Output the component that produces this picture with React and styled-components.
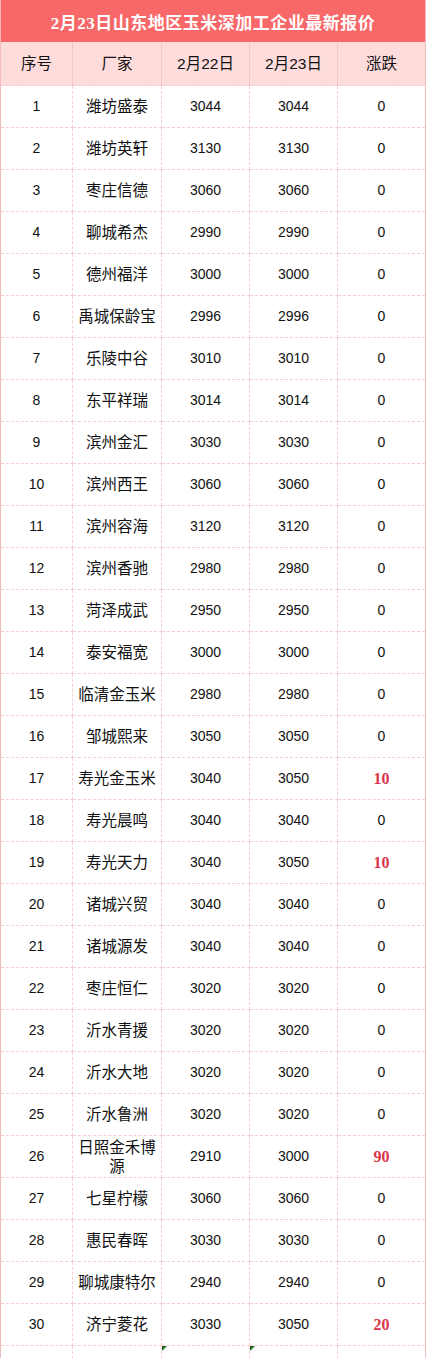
import React from 'react'
import styled, { createGlobalStyle } from 'styled-components'

const rows = [
  ['潍坊盛泰', 3044, 3044],
  ['潍坊英轩', 3130, 3130],
  ['枣庄信德', 3060, 3060],
  ['聊城希杰', 2990, 2990],
  ['德州福洋', 3000, 3000],
  ['禹城保龄宝', 2996, 2996],
  ['乐陵中谷', 3010, 3010],
  ['东平祥瑞', 3014, 3014],
  ['滨州金汇', 3030, 3030],
  ['滨州西王', 3060, 3060],
  ['滨州容海', 3120, 3120],
  ['滨州香驰', 2980, 2980],
  ['菏泽成武', 2950, 2950],
  ['泰安福宽', 3000, 3000],
  ['临清金玉米', 2980, 2980],
  ['邹城熙来', 3050, 3050],
  ['寿光金玉米', 3040, 3050],
  ['寿光晨鸣', 3040, 3040],
  ['寿光天力', 3040, 3050],
  ['诸城兴贸', 3040, 3040],
  ['诸城源发', 3040, 3040],
  ['枣庄恒仁', 3020, 3020],
  ['沂水青援', 3020, 3020],
  ['沂水大地', 3020, 3020],
  ['沂水鲁洲', 3020, 3020],
  ['日照金禾博源', 2910, 3000],
  ['七星柠檬', 3060, 3060],
  ['惠民春晖', 3030, 3030],
  ['聊城康特尔', 2940, 2940],
  ['济宁菱花', 3030, 3050]
]

const GlobalStyle = createGlobalStyle`
  body {
    margin: 0;
    background: #ffffff;
    font-family: "Liberation Sans", "Noto Sans CJK SC", sans-serif;
    color: #111111;
  }
`

const Sheet = styled.div`
  width: 426px;
  height: 1358px;
  overflow: hidden;
  box-sizing: border-box;
  border-left: 1px solid #f2bcbc;
  border-right: 1px solid #f2bcbc;
`

const Title = styled.div`
  height: 42px;
  background: #f96868;
  color: #ffffff;
  font-family: "Liberation Serif", "Noto Sans CJK SC", serif;
  font-weight: bold;
  font-size: 17px;
  display: flex;
  align-items: center;
  justify-content: center;
  letter-spacing: 0.5px;
`

const Row = styled.div`
  display: grid;
  grid-template-columns: 72px 89px 88px 88px 87px;
  height: ${({ $head }) => ($head ? 44 : 42)}px;
  background: ${({ $head }) => ($head ? '#ffdcdc' : '#ffffff')};
`

const Cell = styled.div`
  position: relative;
  box-sizing: border-box;
  display: flex;
  align-items: center;
  justify-content: center;
  text-align: center;
  font-size: ${({ $num }) => ($num ? 14 : 15.5)}px;
  line-height: 19px;
  padding: 0 2px;
  border-bottom: 1px dashed #f6cfd4;
  border-right: 1px ${({ $head }) => ($head ? 'solid #f4c6c6' : 'dashed #f6cfd4')};
  &:last-child {
    border-right: none;
  }
`

const Rise = styled.span`
  font-family: "Liberation Serif", serif;
  font-weight: bold;
  font-size: 16px;
  color: #d8344a;
`

const Flag = styled.span`
  position: absolute;
  top: 0;
  left: 0;
  width: 0;
  height: 0;
  border-top: 5px solid #1f6b1f;
  border-right: 5px solid transparent;
`

export default function App () {
  return (
    <>
      <GlobalStyle />
      <Sheet>
        <Title>2月23日山东地区玉米深加工企业最新报价</Title>
        <Row $head>
          <Cell $head>序号</Cell>
          <Cell $head>厂家</Cell>
          <Cell $head>2月22日</Cell>
          <Cell $head>2月23日</Cell>
          <Cell $head>涨跌</Cell>
        </Row>
        {rows.map(([name, before, after], i) => {
          const diff = after - before
          return (
            <Row key={name}>
              <Cell $num>{i + 1}</Cell>
              <Cell>{name}</Cell>
              <Cell $num>{before}</Cell>
              <Cell $num>{after}</Cell>
              <Cell $num>{diff ? <Rise>{diff}</Rise> : 0}</Cell>
            </Row>
          )
        })}
        <Row>
          <Cell />
          <Cell />
          <Cell><Flag /></Cell>
          <Cell><Flag /></Cell>
          <Cell />
        </Row>
      </Sheet>
    </>
  )
}
